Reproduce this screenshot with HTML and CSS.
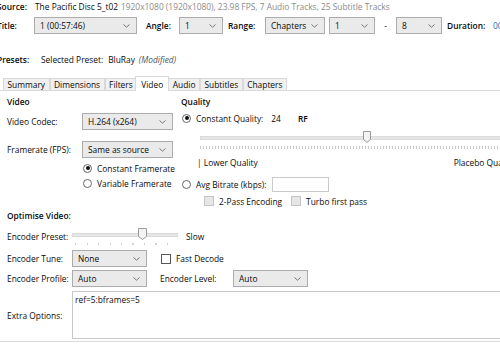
FILE: index.html
```html
<!DOCTYPE html>
<html lang="en">
<head>
    <meta charset="UTF-8">
    <meta name="viewport" content="width=device-width, initial-scale=1.0">
    <title>HandBrake - Video</title>
    <link rel="stylesheet" href="styles.css">
</head>
<body>

    <div class="top">
        <div class="row src-row">
            <b class="lbl-src">Source:</b>
            <span class="src-name">The Pacific Disc 5_t02</span>
            <span class="info">1920x1080 (1920x1080), 23.98 FPS, 7 Audio Tracks, 25 Subtitle Tracks</span>
        </div>

        <div class="row title-row">
            <b class="lbl-title">Title:</b>
            <div class="combo w-title">1 (00:57:46)<svg class="chev" width="7" height="4" viewBox="0 0 7 4"><path d="M0.5 0.5 L3.5 3.2 L6.5 0.5" fill="none" stroke="#777" stroke-width="1"/></svg></div>
            <b class="lbl-angle">Angle:</b>
            <div class="combo w-angle">1<svg class="chev" width="7" height="4" viewBox="0 0 7 4"><path d="M0.5 0.5 L3.5 3.2 L6.5 0.5" fill="none" stroke="#777" stroke-width="1"/></svg></div>
            <b class="lbl-range">Range:</b>
            <div class="combo w-chap">Chapters<svg class="chev" width="7" height="4" viewBox="0 0 7 4"><path d="M0.5 0.5 L3.5 3.2 L6.5 0.5" fill="none" stroke="#777" stroke-width="1"/></svg></div>
            <div class="combo w-num">1<svg class="chev" width="7" height="4" viewBox="0 0 7 4"><path d="M0.5 0.5 L3.5 3.2 L6.5 0.5" fill="none" stroke="#777" stroke-width="1"/></svg></div>
            <span class="dash">-</span>
            <div class="combo w-num">8<svg class="chev" width="7" height="4" viewBox="0 0 7 4"><path d="M0.5 0.5 L3.5 3.2 L6.5 0.5" fill="none" stroke="#777" stroke-width="1"/></svg></div>
            <b class="lbl-dur">Duration:</b>
            <span class="dur">00:57:46</span>
        </div>

        <div class="row presets-row">
            <b class="lbl-presets">Presets:</b>
            <span>Selected Preset:</span>
            <span class="preset-name">BluRay</span>
            <i class="modified">(Modified)</i>
        </div>
    </div>

    <div class="tabs">
        <div class="tab">Summary</div>
        <div class="tab">Dimensions</div>
        <div class="tab">Filters</div>
        <div class="tab active">Video</div>
        <div class="tab">Audio</div>
        <div class="tab">Subtitles</div>
        <div class="tab">Chapters</div>
    </div>

    <div class="panel">
        <div class="upper">
            <div class="col-video">
                <div class="head">Video</div>
                <div class="field codec-row">
                    <span class="flabel">Video Codec:</span>
                    <div class="combo w-codec">H.264 (x264)<svg class="chev" width="7" height="4" viewBox="0 0 7 4"><path d="M0.5 0.5 L3.5 3.2 L6.5 0.5" fill="none" stroke="#777" stroke-width="1"/></svg></div>
                </div>
                <div class="field fps-row">
                    <span class="flabel">Framerate (FPS):</span>
                    <div class="combo w-codec">Same as source<svg class="chev" width="7" height="4" viewBox="0 0 7 4"><path d="M0.5 0.5 L3.5 3.2 L6.5 0.5" fill="none" stroke="#777" stroke-width="1"/></svg></div>
                </div>
                <div class="opt cfr-row"><span class="radio checked"></span>Constant Framerate</div>
                <div class="opt vfr-row"><span class="radio"></span>Variable Framerate</div>
            </div>

            <div class="col-quality">
                <div class="head">Quality</div>
                <div class="opt cq-row">
                    <span class="radio checked"></span>
                    <span>Constant Quality:</span>
                    <span class="cq-val">24</span>
                    <b class="rf">RF</b>
                </div>
                <div class="slider rf-slider">
                    <div class="track"></div>
                    <svg class="thumb" style="left: 163px" width="8" height="12" viewBox="0 0 8 12"><path d="M0.5 0.5 H7.5 V8.5 L4 11.5 L0.5 8.5 Z" fill="#f3f3f3" stroke="#9a9a9a" stroke-width="1"/></svg>
                    <div class="ticks dense"></div>
                </div>
                <div class="scale-labels">
                    <span>| Lower Quality</span>
                    <span>Placebo Quality |</span>
                </div>
                <div class="opt abr-row">
                    <span class="radio"></span>
                    <span>Avg Bitrate (kbps):</span>
                    <div class="textbox"></div>
                </div>
                <div class="opt pass-row">
                    <span class="check disabled"></span><span class="pass-lbl">2-Pass Encoding</span>
                    <span class="check disabled"></span><span>Turbo first pass</span>
                </div>
            </div>
        </div>

        <div class="head optimise">Optimise Video:</div>

        <div class="field preset-row">
            <span class="elabel">Encoder Preset:</span>
            <div class="slider preset-slider">
                <div class="track"></div>
                <svg class="thumb" style="left: 66px" width="9" height="12" viewBox="0 0 9 12"><path d="M0.5 0.5 H8.5 V8.5 L4.5 11.5 L0.5 8.5 Z" fill="#f3f3f3" stroke="#9a9a9a" stroke-width="1"/></svg>
                <div class="ticks sparse"></div>
            </div>
            <span class="slow">Slow</span>
        </div>

        <div class="field tune-row">
            <span class="elabel">Encoder Tune:</span>
            <div class="combo w-enc">None<svg class="chev" width="7" height="4" viewBox="0 0 7 4"><path d="M0.5 0.5 L3.5 3.2 L6.5 0.5" fill="none" stroke="#777" stroke-width="1"/></svg></div>
            <span class="check fast"></span><span>Fast Decode</span>
        </div>

        <div class="field profile-row">
            <span class="elabel">Encoder Profile:</span>
            <div class="combo w-enc">Auto<svg class="chev" width="7" height="4" viewBox="0 0 7 4"><path d="M0.5 0.5 L3.5 3.2 L6.5 0.5" fill="none" stroke="#777" stroke-width="1"/></svg></div>
            <span class="level-lbl">Encoder Level:</span>
            <div class="combo w-enc">Auto<svg class="chev" width="7" height="4" viewBox="0 0 7 4"><path d="M0.5 0.5 L3.5 3.2 L6.5 0.5" fill="none" stroke="#777" stroke-width="1"/></svg></div>
        </div>

        <div class="extra-row">
            <span class="elabel">Extra Options:</span>
            <div class="extra-box">ref=5:bframes=5</div>
        </div>
    </div>

</body>
</html>
```

FILE: styles.css
```css
html, body {
    margin: 0;
    padding: 0;
    background: #fff;
}
body {
    width: 500px;
    height: 344px;
    overflow: hidden;
    font-family: "Open Sans", "Noto Sans", sans-serif;
    font-size: 8.4px;
    color: #0a0a0a;
    white-space: nowrap;
}
b {
    font-weight: 600;
}

/* header */
.top {
    margin-left: -3px;
}
.row {
    display: flex;
    align-items: center;
}
.row > *, .field > *, .opt > * {
    flex: none;
}
.src-row {
    height: 12px;
}
.lbl-src {
    width: 38px;
}
.src-name {
    width: 86px;
}
.info {
    color: #8a8a8a;
}
.title-row {
    margin-top: 5px;
    height: 17px;
}
.lbl-title {
    width: 37px;
}
.lbl-angle {
    margin-left: 9px;
    width: 33px;
}
.lbl-range {
    margin-left: 5px;
    width: 37px;
}
.lbl-dur {
    margin-left: 5px;
    width: 46px;
}
.dash {
    width: 21px;
    text-align: center;
}
.dur {
    color: #1f6aa8;
}
.w-title { width: 103px; }
.w-angle { width: 44px; }
.w-chap { width: 60px; margin-right: 4px; }
.w-num { width: 46px; }
.w-codec { width: 91px; }
.w-enc { width: 75px; }

.combo {
    box-sizing: border-box;
    height: 17px;
    line-height: 15px;
    border: 1px solid #acacac;
    background: #eaeaea;
    padding-left: 5px;
    display: flex;
    align-items: center;
    justify-content: space-between;
    flex: none;
}
.chev {
    margin-right: 6px;
}
.presets-row {
    margin-top: 19px;
    height: 12px;
}
.lbl-presets {
    width: 44px;
}
.preset-name {
    margin-left: 5px;
}
.modified {
    margin-left: 4px;
    color: #555;
}

/* tabs */
.tabs {
    display: flex;
    align-items: flex-end;
    margin-top: 10px;
    padding-left: 3px;
    height: 15px;
}
.tab {
    box-sizing: border-box;
    height: 12px;
    line-height: 11px;
    padding: 0 3.5px;
    margin-right: 0;
    background: #f0f0f0;
    border: 1px solid #d9d9d9;
    border-bottom: none;
}
.tab.active {
    height: 15px;
    line-height: 15px;
    background: #fff;
    margin: 0 -1px 0 -2px;
    padding: 0 5px;
    position: relative;
    z-index: 1;
    top: 1px;
}

/* panel */
.panel {
    border-top: 1px solid #d9d9d9;
    border-bottom: 1px solid #d9d9d9;
    padding: 5px 0 1px 7px;
    height: 244px;
}
.upper {
    display: grid;
    grid-template-columns: 174px 1fr;
}
.head {
    font-weight: 600;
    height: 12px;
    line-height: 12px;
}
.field {
    display: flex;
    align-items: center;
}
.flabel {
    width: 75px;
}
.codec-row {
    margin-top: 5px;
    height: 17px;
}
.fps-row {
    margin-top: 11px;
    height: 17px;
}
.opt {
    display: flex;
    align-items: center;
    height: 12px;
}
.cfr-row {
    margin-top: 4px;
    padding-left: 76px;
}
.vfr-row {
    margin-top: 3px;
    padding-left: 76px;
}
.radio {
    box-sizing: border-box;
    width: 9px;
    height: 9px;
    border-radius: 50%;
    border: 1px solid #666;
    background: #fff;
    margin-right: 5px;
    display: flex;
    align-items: center;
    justify-content: center;
}
.radio.checked::after {
    content: "";
    width: 4px;
    height: 4px;
    border-radius: 50%;
    background: #111;
}

.col-quality {
    overflow: hidden;
    margin-right: -10px;
}
.cq-row {
    margin-top: 4px;
    padding-left: 1px;
}
.cq-val {
    margin-left: 8px;
}
.rf {
    margin-left: 17px;
}
.slider {
    position: relative;
    height: 21px;
}
.track {
    position: absolute;
    left: 0;
    right: 0;
    top: 6px;
    height: 2px;
    background: #e6e6e6;
    border: 1px solid #dadada;
}
.thumb {
    position: absolute;
    top: 1px;
}
.ticks {
    position: absolute;
    left: 0;
    right: 0;
    top: 16px;
    height: 3px;
}
.rf-slider {
    margin: 6px 0 0 19px;
}
.dense {
    background: repeating-linear-gradient(to right, #c9c9c9 0 1px, transparent 1px 3px);
}
.scale-labels {
    margin-top: 6px;
    height: 12px;
    line-height: 12px;
    padding-left: 16px;
    display: flex;
    gap: 196px;
}
.abr-row {
    margin-top: 7px;
    height: 16px;
    padding-left: 1px;
}
.textbox {
    box-sizing: border-box;
    width: 57px;
    height: 15px;
    border: 1px solid #c9c9c9;
    background: #fff;
    margin-left: 6px;
}
.pass-row {
    margin-top: 3px;
    padding-left: 23px;
}
.check {
    box-sizing: border-box;
    width: 10px;
    height: 10px;
    border: 1px solid #555;
    background: #fff;
    margin-right: 5px;
}
.check.disabled {
    border-color: #c4c4c4;
    background: #e6e6e6;
}
.pass-lbl {
    margin-right: 9px;
}

/* optimise */
.optimise {
    margin-top: 3px;
}
.elabel {
    width: 65px;
}
.preset-row {
    margin-top: 5px;
    height: 19px;
}
.preset-slider {
    width: 106px;
    height: 19px;
}
.sparse {
    top: 16px;
    height: 2px;
    left: 3px;
    background: repeating-linear-gradient(to right, #cfcfcf 0 1px, transparent 1px 11.5px);
}
.slow {
    margin-left: 8px;
}
.tune-row {
    margin-top: 4px;
    height: 17px;
}
.fast {
    margin-left: 14px;
}
.profile-row {
    margin-top: 3px;
    height: 17px;
}
.level-lbl {
    width: 73px;
    margin-left: 13px;
}
.extra-row {
    display: flex;
    align-items: center;
    margin-top: 4px;
    height: 48px;
}
.extra-box {
    box-sizing: border-box;
    height: 48px;
    flex: 1;
    margin-right: -5px;
    border: 1px solid #c9c9c9;
    align-self: flex-start;
    padding: 2px 0 0 2px;
    line-height: 12px;
}
```
